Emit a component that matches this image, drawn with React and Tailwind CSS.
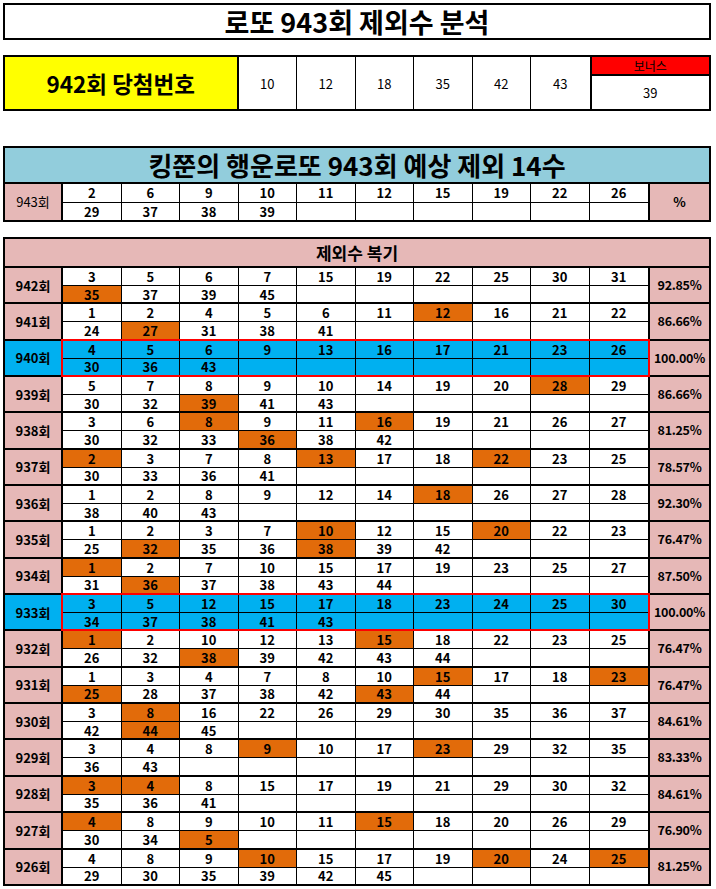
import React from "react";

const ROUNDS = [
  ["942", "3 5 6 7 15 19 22 25 30 31", "*35 37 39 45", "92.85%"],
  ["941", "1 2 4 5 6 11 *12 16 21 22", "24 *27 31 38 41", "86.66%"],
  ["940", "4 5 6 9 13 16 17 21 23 26", "30 36 43", "100.00%", true],
  ["939", "5 7 8 9 10 14 19 20 *28 29", "30 32 *39 41 43", "86.66%"],
  ["938", "3 6 *8 9 11 *16 19 21 26 27", "30 32 33 *36 38 42", "81.25%"],
  ["937", "*2 3 7 8 *13 17 18 *22 23 25", "30 33 36 41", "78.57%"],
  ["936", "1 2 8 9 12 14 *18 26 27 28", "38 40 43", "92.30%"],
  ["935", "1 2 3 7 *10 12 15 *20 22 23", "25 *32 35 36 *38 39 42", "76.47%"],
  ["934", "*1 2 7 10 15 17 19 23 25 27", "31 *36 37 38 43 44", "87.50%"],
  ["933", "3 5 12 15 17 18 23 24 25 30", "34 37 38 41 43", "100.00%", true],
  ["932", "*1 2 10 12 13 *15 18 22 23 25", "26 32 *38 39 42 43 44", "76.47%"],
  ["931", "1 3 4 7 8 10 *15 17 18 *23", "*25 28 37 38 42 *43 44", "76.47%"],
  ["930", "3 *8 16 22 26 29 30 35 36 37", "42 *44 45", "84.61%"],
  ["929", "3 4 8 *9 10 17 *23 29 32 35", "36 43", "83.33%"],
  ["928", "*3 *4 8 15 17 19 21 29 30 32", "35 36 41", "84.61%"],
  ["927", "*4 8 9 10 11 *15 18 20 26 29", "30 34 *5", "76.90%"],
  ["926", "4 8 9 *10 15 17 19 *20 24 *25", "29 30 35 39 42 45", "81.25%"],
];

// split "3 *8 16" into 10 slots, "*" marks an orange cell
const slots = (s) => {
  const a = s.split(" ");
  while (a.length < 10) a.push("");
  return a;
};

function Cell({ v, hit, top, last }) {
  const orange = v.startsWith("*");
  const bg = orange ? "bg-[#e26b0a]" : hit ? "bg-[#00b0f0]" : "bg-white";
  return (
    <div
      className={`flex items-center justify-center leading-none ${bg} ${top ? "border-b border-black" : ""} ${last ? "" : "border-r border-black"}`}
    >
      {orange ? v.slice(1) : v}
    </div>
  );
}

function Round({ no, top, bottom, pct, hit, last }) {
  return (
    <div
      className={`relative grid grid-cols-[58px_repeat(10,58.5px)_1fr] grid-rows-[18px_16.35px] text-[13px] font-bold ${last ? "" : "border-b-2 border-black"}`}
    >
      <div className={`row-span-2 flex items-center justify-center border-r-2 border-black leading-none ${hit ? "bg-[#00b0f0]" : "bg-[#e6b8b7]"}`}>
        {no}회
      </div>
      {slots(top).map((v, i) => (
        <Cell key={"t" + i} v={v} hit={hit} top last={i === 9} />
      ))}
      <div className="row-span-2 flex items-center justify-center border-l-2 border-black bg-[#e6b8b7] text-[12.5px] leading-none tracking-[-0.3px]">
        {pct}
      </div>
      {slots(bottom).map((v, i) => (
        <Cell key={"b" + i} v={v} hit={hit} last={i === 9} />
      ))}
      {hit && (
        <div className="pointer-events-none absolute -top-[2px] -bottom-[2px] left-[56px] right-[59px] border-2 border-[#ff0000]" />
      )}
    </div>
  );
}

export default function App() {
  return (
    <div className="w-[716px] bg-white text-black font-['Noto_Sans_CJK_KR','Noto_Sans',sans-serif]">
      <div className="ml-[3px] w-[708px] pt-[3px] pb-[2px]">
        {/* title */}
        <div className="flex h-[37px] items-center justify-center border-2 border-black text-[27px] font-bold leading-none">
          로또 943회 제외수 분석
        </div>

        {/* last draw */}
        <div className="mt-[15px] grid h-[56px] grid-cols-[233.5px_repeat(6,58.5px)_1fr] border-2 border-black">
          <div className="flex items-center justify-center border-r-2 border-black bg-[#ffff00] text-[22.5px] font-bold leading-none">
            942회 당첨번호
          </div>
          {["10", "12", "18", "35", "42", "43"].map((n, i) => (
            <div
              key={n}
              className={`flex items-center justify-center text-[13px] leading-none ${i === 5 ? "" : "border-r border-black"}`}
            >
              {n}
            </div>
          ))}
          <div className="flex flex-col border-l-2 border-black">
            <div className="flex h-[19px] items-center justify-center border-b-2 border-black bg-[#ff0000] text-[12px] leading-none">
              보너스
            </div>
            <div className="flex flex-1 items-center justify-center text-[13px] leading-none">39</div>
          </div>
        </div>

        {/* prediction */}
        <div className="mt-[35px] border-2 border-black">
          <div className="flex h-[35.5px] items-center justify-center border-b-2 border-black bg-[#92cddc] text-[26px] font-bold leading-none">
            킹쭌의 행운로또 943회 예상 제외 14수
          </div>
          <div className="grid grid-cols-[58px_repeat(10,58.5px)_1fr] grid-rows-[19px_17px] text-[13px] font-bold">
            <div className="row-span-2 flex items-center justify-center border-r-2 border-black bg-[#e6b8b7] font-normal leading-none">
              943회
            </div>
            {slots("2 6 9 10 11 12 15 19 22 26").map((v, i) => (
              <Cell key={"t" + i} v={v} top last={i === 9} />
            ))}
            <div className="row-span-2 flex items-center justify-center border-l-2 border-black bg-[#e6b8b7] leading-none">
              %
            </div>
            {slots("29 37 38 39").map((v, i) => (
              <Cell key={"b" + i} v={v} last={i === 9} />
            ))}
          </div>
        </div>

        {/* review */}
        <div className="mt-[15.5px] border-2 border-black">
          <div className="flex h-[29px] items-center justify-center border-b-2 border-black bg-[#e6b8b7] text-[17px] font-bold leading-none">
            제외수 복기
          </div>
          {ROUNDS.map(([no, top, bottom, pct, hit], i) => (
            <Round key={no} no={no} top={top} bottom={bottom} pct={pct} hit={hit} last={i === ROUNDS.length - 1} />
          ))}
        </div>
      </div>
    </div>
  );
}
